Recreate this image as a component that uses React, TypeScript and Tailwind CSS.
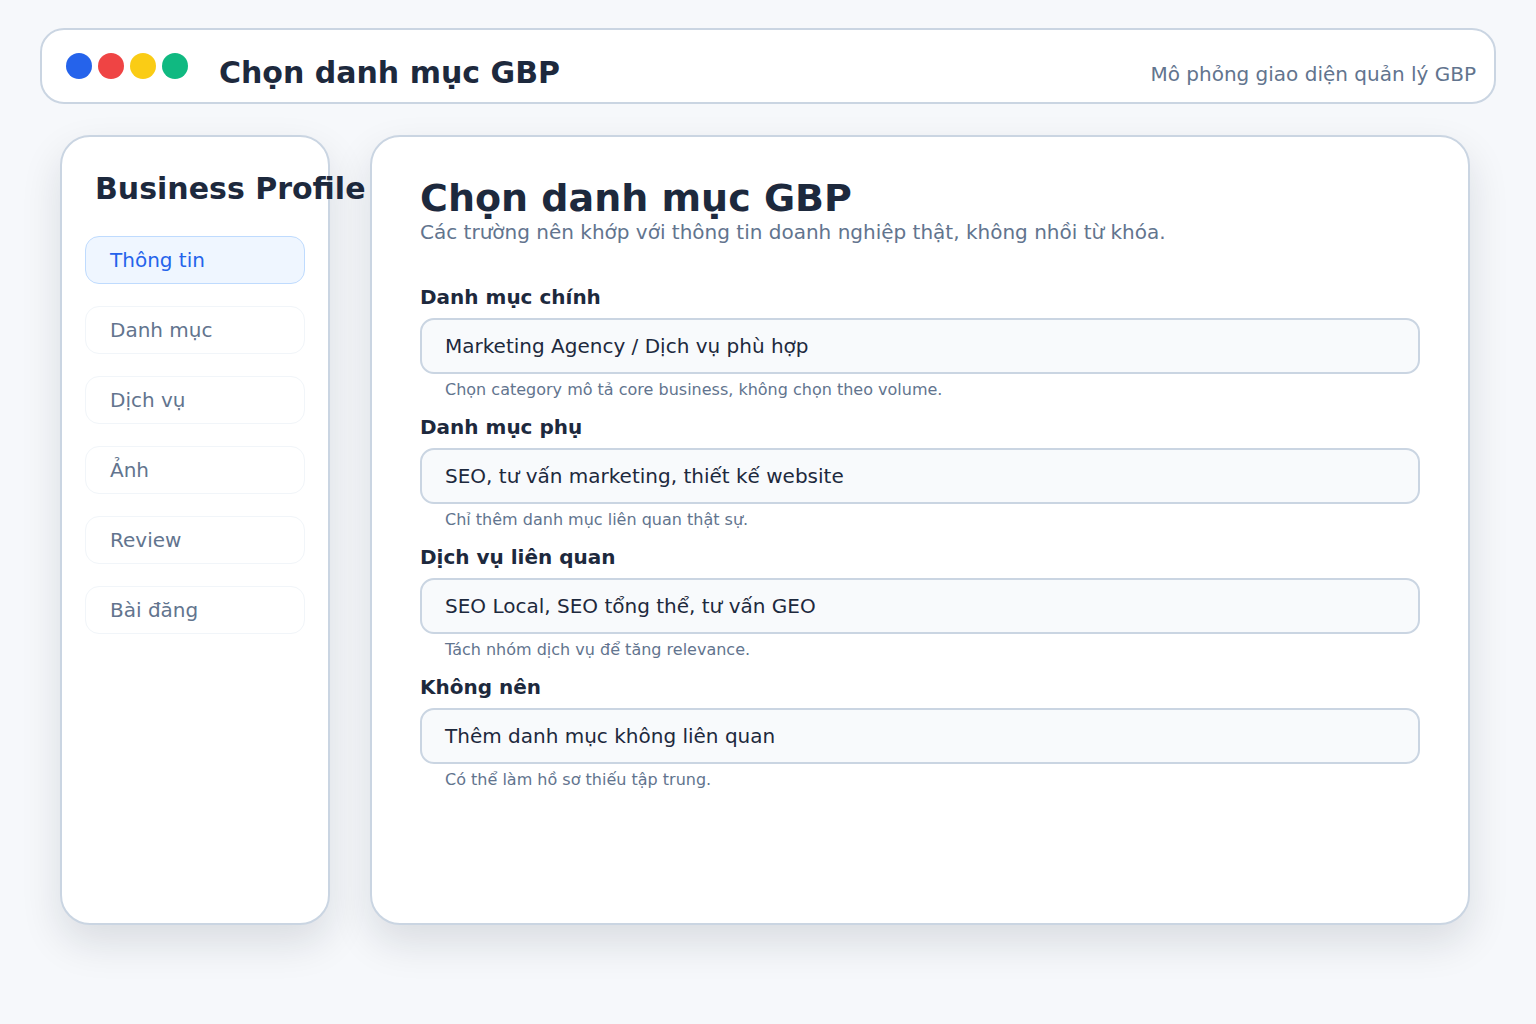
import React from 'react';

interface Field {
  label: string;
  value: string;
  hint: string;
}

const navItems = ['Thông tin', 'Danh mục', 'Dịch vụ', 'Ảnh', 'Review', 'Bài đăng'];

const fields: Field[] = [
  {
    label: 'Danh mục chính',
    value: 'Marketing Agency / Dịch vụ phù hợp',
    hint: 'Chọn category mô tả core business, không chọn theo volume.'
  },
  {
    label: 'Danh mục phụ',
    value: 'SEO, tư vấn marketing, thiết kế website',
    hint: 'Chỉ thêm danh mục liên quan thật sự.'
  },
  {
    label: 'Dịch vụ liên quan',
    value: 'SEO Local, SEO tổng thể, tư vấn GEO',
    hint: 'Tách nhóm dịch vụ để tăng relevance.'
  },
  {
    label: 'Không nên',
    value: 'Thêm danh mục không liên quan',
    hint: 'Có thể làm hồ sơ thiếu tập trung.'
  }
];

const App: React.FC = () => {
  return (
    <div className="min-h-screen bg-[#f6f8fb] px-10 pt-[28px] text-slate-800 font-['DejaVu_Sans',sans-serif]">
      {/* top bar */}
      <header className="flex h-[76px] items-start rounded-[24px] border-2 border-slate-300 bg-white pl-[24px] pr-[18px]">
        <div className="mt-[23px] flex gap-[6px]">
          <span className="h-[26px] w-[26px] rounded-full bg-[#2563eb]"></span>
          <span className="h-[26px] w-[26px] rounded-full bg-[#ef4444]"></span>
          <span className="h-[26px] w-[26px] rounded-full bg-[#facc15]"></span>
          <span className="h-[26px] w-[26px] rounded-full bg-[#10b981]"></span>
        </div>
        <h1 className="ml-[31px] mt-[20px] text-[30px] font-bold leading-normal text-slate-800">
          Chọn danh mục GBP
        </h1>
        <p className="ml-auto mt-[29px] text-[20px] leading-normal text-slate-500">
          Mô phỏng giao diện quản lý GBP
        </p>
      </header>

      <div className="mt-[31px] flex gap-10 px-5">
        {/* sidebar */}
        <aside className="h-[790px] w-[270px] shrink-0 rounded-[30px] border-2 border-slate-300 bg-white px-[23px] pt-[29px] shadow-[0_18px_40px_rgba(15,23,42,0.12)]">
          <h2 className="whitespace-nowrap pl-[10px] text-[30px] font-bold leading-normal text-slate-800">
            Business Profile
          </h2>
          <nav className="mt-[25px] flex flex-col gap-[22px]">
            {navItems.map((item, i) => (
              <div
                key={item}
                className={
                  i === 0
                    ? 'flex h-12 items-center rounded-[14px] border border-[#bfdbfe] bg-[#eff6ff] px-6 text-[20px] text-[#2563eb]'
                    : 'flex h-12 items-center rounded-[14px] border border-slate-100 bg-white px-6 text-[20px] text-slate-500'
                }
              >
                {item}
              </div>
            ))}
          </nav>
        </aside>

        {/* main panel */}
        <main className="h-[790px] w-[1100px] shrink-0 rounded-[30px] border-2 border-slate-300 bg-white px-12 pt-[33px] shadow-[0_18px_40px_rgba(15,23,42,0.12)]">
          <h2 className="text-[38px] font-bold leading-normal text-slate-800">Chọn danh mục GBP</h2>
          <p className="-mt-[10px] text-[20px] leading-normal text-slate-500">
            Các trường nên khớp với thông tin doanh nghiệp thật, không nhồi từ khóa.
          </p>

          <div className="mt-[38px] flex w-[1000px] flex-col gap-[15px]">
            {fields.map((f) => (
              <div key={f.label}>
                <label className="block text-[20px] font-bold leading-6 text-slate-800">{f.label}</label>
                <div className="mt-[9px] flex h-14 items-center rounded-[14px] border-2 border-slate-300 bg-slate-50 px-[23px] text-[20px] text-slate-800">
                  {f.value}
                </div>
                <p className="mt-[6px] pl-[25px] text-base leading-5 text-slate-500">{f.hint}</p>
              </div>
            ))}
          </div>
        </main>
      </div>
    </div>
  );
};

export default App;
